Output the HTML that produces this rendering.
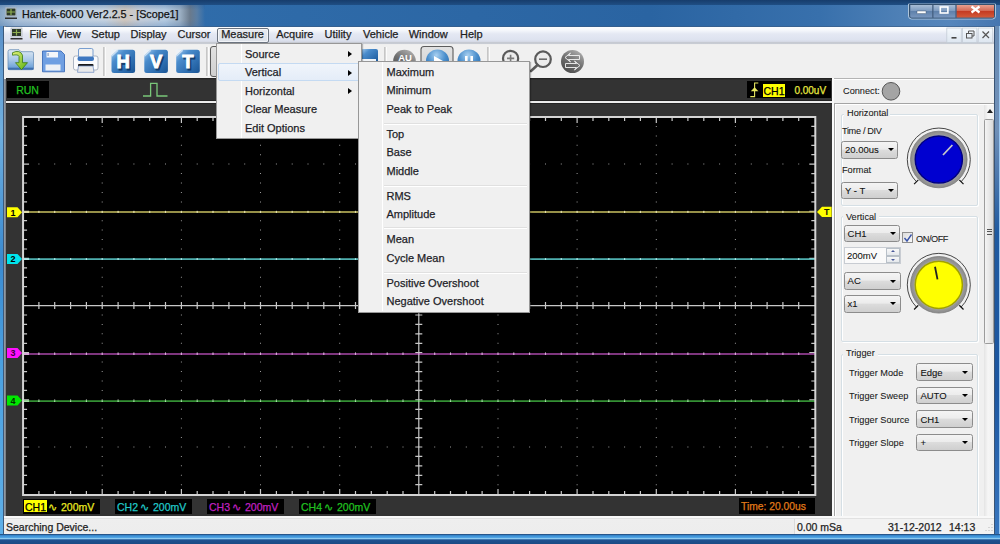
<!DOCTYPE html>
<html><head><meta charset="utf-8">
<style>
*{box-sizing:border-box;margin:0;padding:0}
html,body{width:1000px;height:544px;overflow:hidden;position:relative;font-family:"Liberation Sans",sans-serif;background:#2f6aa6}
.a{position:absolute}
.t{position:absolute;white-space:pre;line-height:1;-webkit-text-stroke:0.25px currentColor}
svg{position:absolute;overflow:visible}
</style></head><body>
<div class="a" style="left:0;top:0;width:1000px;height:27px;background:linear-gradient(90deg,#3270ae 0px,#2e6aa8 300px,#2a64a2 650px,#3870ac 820px,#4e80b6 900px,#5686bc 950px,#4676b0 1000px)"></div>
<div class="a" style="left:0;top:4px;width:205px;height:23px;background:linear-gradient(90deg,#86a6c6 0,#aac0d8 15px,#bccee0 60px,#c4d2e0 105px,#d0c6bc 125px,#c4ccd8 140px,#b4cae0 165px,#9cb0c4 180px,#6a7a8c 190px,#5a7ea4 197px,rgba(48,110,174,0) 205px)"></div>
<div class="a" style="left:0;top:4px;width:205px;height:23px;background:linear-gradient(180deg,rgba(40,90,150,0.35),rgba(255,255,255,0) 6px,rgba(255,255,255,0) 16px,rgba(60,110,170,0.3))"></div>
<div class="a" style="left:3px;top:25.6px;width:992px;height:1px;background:#3a5a80;opacity:0.6"></div>
<div class="a" style="left:0;top:0;width:1000px;height:4.5px;background:linear-gradient(180deg,#173d6c,#1f4e84)"></div>
<div class="t" style="left:22px;top:8.91px;font-size:10.75px;color:#111;">Hantek-6000 Ver2.2.5 - [Scope1]</div>
<div class="a" style="left:0;top:26px;width:3px;height:518px;background:linear-gradient(180deg,#5a90c8 0%,#70b0e0 20%,#3a8ad0 45%,#4aa0e0 65%,#60b0e8 100%)"></div>
<div class="a" style="left:3px;top:26px;width:1px;height:508px;background:#3c5a7c"></div>
<div class="a" style="left:4px;top:26px;width:1.8px;height:508px;background:linear-gradient(90deg,#9ca4ac,#70747a)"></div>
<div class="a" style="left:994px;top:26px;width:1px;height:508px;background:#3a5474"></div>
<div class="a" style="left:995px;top:26px;width:5px;height:518px;background:linear-gradient(180deg,#6a8cb4,#7090b8 20%,#1f5aa0 40%,#1c56a0 70%,#3a78c0)"></div>
<div class="a" style="left:999px;top:26px;width:1px;height:518px;background:#9cc8f0"></div>
<div class="a" style="left:0;top:533.6px;width:1000px;height:10.4px;background:linear-gradient(180deg,#234c7c 0,#2a5e98 1px,#3a8ed4 1.6px,#4a9ee0 3.4px,#90cdf2 4.4px,#78b8e8 5px,#1f5290 5.8px,#1a4a84 10.4px)"></div>
<div class="a" style="left:4px;top:26.5px;width:990px;height:18px;background:linear-gradient(180deg,#fcfdfe 0,#f6f8fc 3px,#e4e8f3 7px,#dde2ef 13px,#d6dae6 14.5px,#c6cad2 15.5px,#c8ccd4 16.8px,#eeeeee 17.2px)"></div>
<div class="t" style="left:29.5px;top:28.99px;font-size:11px;color:#1e1e1e;">File</div>
<div class="t" style="left:57px;top:28.99px;font-size:11px;color:#1e1e1e;">View</div>
<div class="t" style="left:91.2px;top:28.99px;font-size:11px;color:#1e1e1e;">Setup</div>
<div class="t" style="left:130.5px;top:28.99px;font-size:11px;color:#1e1e1e;">Display</div>
<div class="t" style="left:177.5px;top:28.99px;font-size:11px;color:#1e1e1e;">Cursor</div>
<div class="t" style="left:221.2px;top:28.99px;font-size:11px;color:#1e1e1e;">Measure</div>
<div class="t" style="left:276.2px;top:28.99px;font-size:11px;color:#1e1e1e;">Acquire</div>
<div class="t" style="left:324.5px;top:28.99px;font-size:11px;color:#1e1e1e;">Utility</div>
<div class="t" style="left:363px;top:28.99px;font-size:11px;color:#1e1e1e;">Vehicle</div>
<div class="t" style="left:408.7px;top:28.99px;font-size:11px;color:#1e1e1e;">Window</div>
<div class="t" style="left:460px;top:28.99px;font-size:11px;color:#1e1e1e;">Help</div>
<svg class="a" style="left:0;top:0" width="1000" height="46" viewBox="0 0 1000 46"><defs><linearGradient id="capb" x1="0" y1="0" x2="0" y2="1"><stop offset="0" stop-color="#a9bdd6"/><stop offset="0.45" stop-color="#7f9cc0"/><stop offset="0.5" stop-color="#5e80aa"/><stop offset="1" stop-color="#7896be"/></linearGradient><linearGradient id="capr" x1="0" y1="0" x2="0" y2="1"><stop offset="0" stop-color="#e8a090"/><stop offset="0.45" stop-color="#d46a56"/><stop offset="0.5" stop-color="#c43a22"/><stop offset="1" stop-color="#d25a3a"/></linearGradient><linearGradient id="mdib" x1="0" y1="0" x2="0" y2="1"><stop offset="0" stop-color="#f4f8fc"/><stop offset="1" stop-color="#dde6f0"/></linearGradient></defs><rect x="5.5" y="7.5" width="11" height="9" fill="#c8d4e0" stroke="#9aa8b8" stroke-width="0.6"/><rect x="6.5" y="8.5" width="9" height="7" fill="#2e3a28"/><path d="M11 9V15M7 12H15" stroke="#8fb050" stroke-width="1.2"/><rect x="5" y="17.5" width="12" height="1.5" fill="#303030"/><rect x="11" y="28" width="11" height="9" fill="#d8dde4" stroke="#a0a8b0" stroke-width="0.6"/><rect x="12" y="29" width="9" height="7" fill="#2e3a28"/><path d="M16.5 29.5V35.5M12.5 32.5H20.5" stroke="#8fb050" stroke-width="1.2"/><rect x="10.5" y="38" width="12" height="1.5" fill="#303030"/><path d="M908.5 4H995.5V16Q995.5 19 992.5 19H911.5Q908.5 19 908.5 16Z" fill="none" stroke="#c4d4e4" stroke-width="1" opacity="0.8"/><path d="M909.5 4.5H994.5V15.5Q994.5 18 992 18H912Q909.5 18 909.5 15.5Z" fill="#5a7aa0" stroke="#34506e" stroke-width="1"/><rect x="910.5" y="5" width="22" height="12.5" fill="url(#capb)"/><rect x="933.5" y="5" width="22" height="12.5" fill="url(#capb)"/><rect x="956.5" y="5" width="37.5" height="12.5" fill="url(#capr)"/><path d="M932.8 5V17.5M956 5V17.5" stroke="#3a5070" stroke-width="0.8"/><rect x="917" y="11" width="9" height="2.6" fill="#fff" stroke="#33475f" stroke-width="0.4"/><rect x="940.3" y="7" width="7.6" height="6" fill="none" stroke="#fff" stroke-width="1.6"/><path d="M971.5 6.5L979.5 12.5M979.5 6.5L971.5 12.5" stroke="#fff" stroke-width="2.2"/><rect x="946.8" y="28" width="14.5" height="14.5" fill="url(#mdib)" stroke="#c4ccd6" stroke-width="0.8"/><rect x="962.4" y="28" width="14.5" height="14.5" fill="url(#mdib)" stroke="#c4ccd6" stroke-width="0.8"/><rect x="978.2" y="28" width="14.5" height="14.5" fill="url(#mdib)" stroke="#c4ccd6" stroke-width="0.8"/><rect x="951.5" y="37" width="5" height="1.6" fill="#444"/><rect x="966.5" y="33.5" width="5.5" height="4.5" fill="none" stroke="#555" stroke-width="1"/><path d="M968.5 33.5V31H974V36H972" fill="none" stroke="#555" stroke-width="1"/><path d="M982.5 31.5L989 38M989 31.5L982.5 38" stroke="#555" stroke-width="1.2"/></svg>
<div class="a" style="left:4px;top:44.5px;width:990px;height:34px;background:#f0f0f0"></div>
<svg class="a" style="left:0;top:0" width="1000" height="80" viewBox="0 0 1000 80"><defs><linearGradient id="fold" x1="0" y1="0" x2="0" y2="1"><stop offset="0" stop-color="#dfeaf4"/><stop offset="0.5" stop-color="#a9c8e8"/><stop offset="1" stop-color="#5f98d4"/></linearGradient><linearGradient id="arr" x1="0" y1="0" x2="1" y2="1"><stop offset="0" stop-color="#e6f27a"/><stop offset="1" stop-color="#58b010"/></linearGradient><linearGradient id="hvt" x1="0" y1="0" x2="1" y2="1"><stop offset="0" stop-color="#a8cef0"/><stop offset="0.3" stop-color="#4a8ccc"/><stop offset="0.7" stop-color="#2c6cae"/><stop offset="1" stop-color="#1a5494"/></linearGradient><radialGradient id="gball" cx="0.4" cy="0.3" r="0.8"><stop offset="0" stop-color="#d0d0d0"/><stop offset="0.6" stop-color="#8a8a8a"/><stop offset="1" stop-color="#5a5a5a"/></radialGradient><radialGradient id="bball" cx="0.45" cy="0.25" r="0.8"><stop offset="0" stop-color="#a8d0f0"/><stop offset="0.5" stop-color="#4a8ecc"/><stop offset="1" stop-color="#2466a6"/></radialGradient><linearGradient id="btn" x1="0" y1="0" x2="0" y2="1"><stop offset="0" stop-color="#e2e2e2"/><stop offset="1" stop-color="#cfcfcf"/></linearGradient><linearGradient id="swg" x1="0.8" y1="0" x2="0.2" y2="1"><stop offset="0" stop-color="#b0b0b0"/><stop offset="0.5" stop-color="#707070"/><stop offset="1" stop-color="#4a4a4a"/></linearGradient></defs><g transform="translate(0,-0.8)"><path d="M8 52.5Q8 50.5 10 50.5H19L21 52.5H32Q33.5 52.5 33.5 54V69Q33.5 70.5 32 70.5H9.5Q8 70.5 8 69Z" fill="url(#fold)" stroke="#6a8fb8" stroke-width="0.8"/><rect x="8" y="68.5" width="25.5" height="2" fill="#3f6fae"/><path d="M12.5 53.5Q20 50 22.5 56V63.5H27.5L21.5 70.5L15.5 63.5H19V57Q18 55 12.5 56Z" fill="url(#arr)" stroke="#3a7a10" stroke-width="0.8"/></g><path d="M42.5 51H61L64.5 54.5V71.8H42.5Z" fill="#6f9fe2" stroke="#3d6cb8" stroke-width="0.9"/><rect x="46.5" y="52" width="11.5" height="5.5" fill="#f4f6fa"/><rect x="47.5" y="53" width="1.2" height="3" fill="#8aa0c0"/><rect x="45.5" y="64.5" width="15" height="6" fill="#eef1f6"/><rect x="73.5" y="56" width="24.5" height="14" rx="2" fill="#fafbfd" stroke="#9aa4b4" stroke-width="0.8"/><rect x="78.5" y="48.5" width="14.5" height="9" rx="1.5" fill="#f2f2f2" stroke="#5a8ac8" stroke-width="0.8"/><rect x="77.5" y="56.5" width="16.5" height="4.5" rx="2" fill="#3f78c0"/><rect x="78" y="64" width="15.5" height="2.5" rx="1" fill="#1a1a1a"/><path d="M78.5 66H93L94 72.3H77.5Z" fill="#eaeaea" stroke="#6a8ac0" stroke-width="0.7"/><rect x="103.3" y="47" width="1.4" height="29" fill="#b4b4b4"/><rect x="104.7" y="47" width="1" height="29" fill="#fff"/><rect x="206.3" y="47" width="1.4" height="29" fill="#b4b4b4"/><rect x="207.7" y="47" width="1" height="29" fill="#fff"/><rect x="384.3" y="47" width="1.4" height="29" fill="#b4b4b4"/><rect x="385.7" y="47" width="1" height="29" fill="#fff"/><rect x="487.3" y="47" width="1.4" height="29" fill="#b4b4b4"/><rect x="488.7" y="47" width="1" height="29" fill="#fff"/><rect x="111.5" y="49.8" width="23.6" height="23.2" rx="2.5" fill="url(#hvt)"/><path d="M111.0 49.3H118.5L111.0 56.099999999999994Z" fill="#eef2f6"/><path d="M111.5 56.2L118.0 50.2" stroke="#c4dcf2" stroke-width="1.5"/><text x="124.8" y="69.5" font-family="Liberation Sans" font-weight="bold" font-size="18.5" text-anchor="middle" fill="#0a2e58" stroke="#0a2e58" stroke-width="1" opacity="0.75">H</text><text x="123.3" y="68.2" font-family="Liberation Sans" font-weight="bold" font-size="18.5" text-anchor="middle" fill="#ffffff" stroke="#ffffff" stroke-width="0.9">H</text><rect x="144.3" y="49.8" width="23.6" height="23.2" rx="2.5" fill="url(#hvt)"/><path d="M143.8 49.3H151.3L143.8 56.099999999999994Z" fill="#eef2f6"/><path d="M144.3 56.2L150.8 50.2" stroke="#c4dcf2" stroke-width="1.5"/><text x="157.60000000000002" y="69.5" font-family="Liberation Sans" font-weight="bold" font-size="18.5" text-anchor="middle" fill="#0a2e58" stroke="#0a2e58" stroke-width="1" opacity="0.75">V</text><text x="156.10000000000002" y="68.2" font-family="Liberation Sans" font-weight="bold" font-size="18.5" text-anchor="middle" fill="#ffffff" stroke="#ffffff" stroke-width="0.9">V</text><rect x="176.2" y="49.8" width="23.6" height="23.2" rx="2.5" fill="url(#hvt)"/><path d="M175.7 49.3H183.2L175.7 56.099999999999994Z" fill="#eef2f6"/><path d="M176.2 56.2L182.7 50.2" stroke="#c4dcf2" stroke-width="1.5"/><text x="189.5" y="69.5" font-family="Liberation Sans" font-weight="bold" font-size="18.5" text-anchor="middle" fill="#0a2e58" stroke="#0a2e58" stroke-width="1" opacity="0.75">T</text><text x="188.0" y="68.2" font-family="Liberation Sans" font-weight="bold" font-size="18.5" text-anchor="middle" fill="#ffffff" stroke="#ffffff" stroke-width="0.9">T</text><rect x="210.5" y="46.5" width="20" height="30" rx="2.5" fill="url(#btn)" stroke="#5a5a5a" stroke-width="1"/><rect x="361" y="49" width="17" height="14" rx="2" fill="url(#hvt)"/><rect x="362" y="59" width="14" height="2.5" fill="#f0f4f8"/><circle cx="404.5" cy="61" r="11.3" fill="url(#swg)"/><text x="405" y="60.5" font-family="Liberation Sans" font-weight="bold" font-size="9.5" text-anchor="middle" fill="#fff">AU</text><rect x="421" y="46.5" width="32" height="30" rx="3" fill="url(#btn)" stroke="#5c5c5c" stroke-width="1.1"/><circle cx="437.5" cy="61" r="11.5" fill="url(#bball)"/><path d="M434 56L443 61L434 66Z" fill="#fff"/><circle cx="469" cy="61" r="11.5" fill="url(#bball)"/><rect x="465" y="56" width="2.6" height="10" fill="#fff"/><rect x="470.4" y="56" width="2.6" height="10" fill="#fff"/><circle cx="510.6" cy="58.4" r="7.6" fill="#ececec" stroke="#5a5a5a" stroke-width="2.2"/><path d="M507 58.4H514.2M510.6 54.8V62" stroke="#7a7a7a" stroke-width="1.6"/><path d="M505 64L499 70" stroke="#5a5a5a" stroke-width="2.6" stroke-linecap="round"/><circle cx="543" cy="59.2" r="7.8" fill="#ececec" stroke="#5a5a5a" stroke-width="2.2"/><path d="M539 59.2H547" stroke="#6a6a6a" stroke-width="1.6"/><path d="M537.5 65L531 71" stroke="#5a5a5a" stroke-width="2.6" stroke-linecap="round"/><circle cx="572.5" cy="61.5" r="11.5" fill="url(#swg)"/><path d="M579.5 55.5H568.5L570.5 53L565 57.5L570.5 62L568.5 59.5H579.5Z" fill="none" stroke="#f4f4f4" stroke-width="0.9"/><path d="M565.5 63.5H576.5L574.5 61L580 65.5L574.5 70L576.5 67.5H565.5Z" fill="none" stroke="#f4f4f4" stroke-width="0.9"/></svg>
<div class="a" style="left:5.8px;top:78.3px;width:826.2px;height:437.5px;background:linear-gradient(180deg,#1e1e1e 0,#2a2a2a 1.2px,#333 2px)"></div>
<div class="a" style="left:7px;top:81px;width:42px;height:17px;background:#000"></div>
<div class="t" style="left:16.2px;top:84.92px;font-size:10.5px;color:#22c022;">RUN</div>
<div class="a" style="left:5.8px;top:100px;width:826.2px;height:4.2px;background:linear-gradient(180deg,#262626 0,#222 1px,#eaeaea 1.3px,#eeeeee 2.9px,#222 3.2px,#2a2a2a 4.2px)"></div>
<div class="a" style="left:747px;top:81px;width:84px;height:17px;background:#000"></div>
<div class="a" style="left:762.5px;top:84.3px;width:22.5px;height:12.7px;background:#ffff00"></div>
<svg class="a" style="left:0;top:0" width="1000" height="110" viewBox="0 0 1000 110"><path d="M750.3 96.6H754.6V83H758.3" fill="none" stroke="#e4e460" stroke-width="1.1"/><path d="M750.8 91.3L754.6 87.3L758.4 91.3Z" fill="#e8e860"/></svg>
<div class="t" style="left:763.5px;top:85.62px;font-size:10.5px;color:#000;">CH1</div>
<div class="t" style="left:794.4px;top:86.04px;font-size:10px;color:#e8e840;">0.00uV</div>
<svg class="a" style="left:0;top:0" width="1000" height="544" viewBox="0 0 1000 544"><rect x="23.07" y="117.0" width="792.2299999999999" height="378.0" fill="#000"/><path d="M101.7 125.9h1v1h-1zM101.7 135.4h1v1h-1zM101.7 144.8h1v1h-1zM101.7 154.2h1v1h-1zM101.7 173.1h1v1h-1zM101.7 182.5h1v1h-1zM101.7 191.9h1v1h-1zM101.7 201.4h1v1h-1zM101.7 220.2h1v1h-1zM101.7 229.6h1v1h-1zM101.7 239.1h1v1h-1zM101.7 248.5h1v1h-1zM101.7 267.3h1v1h-1zM101.7 276.8h1v1h-1zM101.7 286.2h1v1h-1zM101.7 295.6h1v1h-1zM101.7 314.5h1v1h-1zM101.7 323.9h1v1h-1zM101.7 333.3h1v1h-1zM101.7 342.8h1v1h-1zM101.7 361.6h1v1h-1zM101.7 371.1h1v1h-1zM101.7 380.5h1v1h-1zM101.7 389.9h1v1h-1zM101.7 408.8h1v1h-1zM101.7 418.2h1v1h-1zM101.7 427.6h1v1h-1zM101.7 437.1h1v1h-1zM101.7 455.9h1v1h-1zM101.7 465.3h1v1h-1zM101.7 474.8h1v1h-1zM101.7 484.2h1v1h-1zM180.9 125.9h1v1h-1zM180.9 135.4h1v1h-1zM180.9 144.8h1v1h-1zM180.9 154.2h1v1h-1zM180.9 173.1h1v1h-1zM180.9 182.5h1v1h-1zM180.9 191.9h1v1h-1zM180.9 201.4h1v1h-1zM180.9 220.2h1v1h-1zM180.9 229.6h1v1h-1zM180.9 239.1h1v1h-1zM180.9 248.5h1v1h-1zM180.9 267.3h1v1h-1zM180.9 276.8h1v1h-1zM180.9 286.2h1v1h-1zM180.9 295.6h1v1h-1zM180.9 314.5h1v1h-1zM180.9 323.9h1v1h-1zM180.9 333.3h1v1h-1zM180.9 342.8h1v1h-1zM180.9 361.6h1v1h-1zM180.9 371.1h1v1h-1zM180.9 380.5h1v1h-1zM180.9 389.9h1v1h-1zM180.9 408.8h1v1h-1zM180.9 418.2h1v1h-1zM180.9 427.6h1v1h-1zM180.9 437.1h1v1h-1zM180.9 455.9h1v1h-1zM180.9 465.3h1v1h-1zM180.9 474.8h1v1h-1zM180.9 484.2h1v1h-1zM260.0 125.9h1v1h-1zM260.0 135.4h1v1h-1zM260.0 144.8h1v1h-1zM260.0 154.2h1v1h-1zM260.0 173.1h1v1h-1zM260.0 182.5h1v1h-1zM260.0 191.9h1v1h-1zM260.0 201.4h1v1h-1zM260.0 220.2h1v1h-1zM260.0 229.6h1v1h-1zM260.0 239.1h1v1h-1zM260.0 248.5h1v1h-1zM260.0 267.3h1v1h-1zM260.0 276.8h1v1h-1zM260.0 286.2h1v1h-1zM260.0 295.6h1v1h-1zM260.0 314.5h1v1h-1zM260.0 323.9h1v1h-1zM260.0 333.3h1v1h-1zM260.0 342.8h1v1h-1zM260.0 361.6h1v1h-1zM260.0 371.1h1v1h-1zM260.0 380.5h1v1h-1zM260.0 389.9h1v1h-1zM260.0 408.8h1v1h-1zM260.0 418.2h1v1h-1zM260.0 427.6h1v1h-1zM260.0 437.1h1v1h-1zM260.0 455.9h1v1h-1zM260.0 465.3h1v1h-1zM260.0 474.8h1v1h-1zM260.0 484.2h1v1h-1zM339.2 125.9h1v1h-1zM339.2 135.4h1v1h-1zM339.2 144.8h1v1h-1zM339.2 154.2h1v1h-1zM339.2 173.1h1v1h-1zM339.2 182.5h1v1h-1zM339.2 191.9h1v1h-1zM339.2 201.4h1v1h-1zM339.2 220.2h1v1h-1zM339.2 229.6h1v1h-1zM339.2 239.1h1v1h-1zM339.2 248.5h1v1h-1zM339.2 267.3h1v1h-1zM339.2 276.8h1v1h-1zM339.2 286.2h1v1h-1zM339.2 295.6h1v1h-1zM339.2 314.5h1v1h-1zM339.2 323.9h1v1h-1zM339.2 333.3h1v1h-1zM339.2 342.8h1v1h-1zM339.2 361.6h1v1h-1zM339.2 371.1h1v1h-1zM339.2 380.5h1v1h-1zM339.2 389.9h1v1h-1zM339.2 408.8h1v1h-1zM339.2 418.2h1v1h-1zM339.2 427.6h1v1h-1zM339.2 437.1h1v1h-1zM339.2 455.9h1v1h-1zM339.2 465.3h1v1h-1zM339.2 474.8h1v1h-1zM339.2 484.2h1v1h-1zM418.3 125.9h1v1h-1zM418.3 135.4h1v1h-1zM418.3 144.8h1v1h-1zM418.3 154.2h1v1h-1zM418.3 173.1h1v1h-1zM418.3 182.5h1v1h-1zM418.3 191.9h1v1h-1zM418.3 201.4h1v1h-1zM418.3 220.2h1v1h-1zM418.3 229.6h1v1h-1zM418.3 239.1h1v1h-1zM418.3 248.5h1v1h-1zM418.3 267.3h1v1h-1zM418.3 276.8h1v1h-1zM418.3 286.2h1v1h-1zM418.3 295.6h1v1h-1zM418.3 314.5h1v1h-1zM418.3 323.9h1v1h-1zM418.3 333.3h1v1h-1zM418.3 342.8h1v1h-1zM418.3 361.6h1v1h-1zM418.3 371.1h1v1h-1zM418.3 380.5h1v1h-1zM418.3 389.9h1v1h-1zM418.3 408.8h1v1h-1zM418.3 418.2h1v1h-1zM418.3 427.6h1v1h-1zM418.3 437.1h1v1h-1zM418.3 455.9h1v1h-1zM418.3 465.3h1v1h-1zM418.3 474.8h1v1h-1zM418.3 484.2h1v1h-1zM497.5 125.9h1v1h-1zM497.5 135.4h1v1h-1zM497.5 144.8h1v1h-1zM497.5 154.2h1v1h-1zM497.5 173.1h1v1h-1zM497.5 182.5h1v1h-1zM497.5 191.9h1v1h-1zM497.5 201.4h1v1h-1zM497.5 220.2h1v1h-1zM497.5 229.6h1v1h-1zM497.5 239.1h1v1h-1zM497.5 248.5h1v1h-1zM497.5 267.3h1v1h-1zM497.5 276.8h1v1h-1zM497.5 286.2h1v1h-1zM497.5 295.6h1v1h-1zM497.5 314.5h1v1h-1zM497.5 323.9h1v1h-1zM497.5 333.3h1v1h-1zM497.5 342.8h1v1h-1zM497.5 361.6h1v1h-1zM497.5 371.1h1v1h-1zM497.5 380.5h1v1h-1zM497.5 389.9h1v1h-1zM497.5 408.8h1v1h-1zM497.5 418.2h1v1h-1zM497.5 427.6h1v1h-1zM497.5 437.1h1v1h-1zM497.5 455.9h1v1h-1zM497.5 465.3h1v1h-1zM497.5 474.8h1v1h-1zM497.5 484.2h1v1h-1zM576.6 125.9h1v1h-1zM576.6 135.4h1v1h-1zM576.6 144.8h1v1h-1zM576.6 154.2h1v1h-1zM576.6 173.1h1v1h-1zM576.6 182.5h1v1h-1zM576.6 191.9h1v1h-1zM576.6 201.4h1v1h-1zM576.6 220.2h1v1h-1zM576.6 229.6h1v1h-1zM576.6 239.1h1v1h-1zM576.6 248.5h1v1h-1zM576.6 267.3h1v1h-1zM576.6 276.8h1v1h-1zM576.6 286.2h1v1h-1zM576.6 295.6h1v1h-1zM576.6 314.5h1v1h-1zM576.6 323.9h1v1h-1zM576.6 333.3h1v1h-1zM576.6 342.8h1v1h-1zM576.6 361.6h1v1h-1zM576.6 371.1h1v1h-1zM576.6 380.5h1v1h-1zM576.6 389.9h1v1h-1zM576.6 408.8h1v1h-1zM576.6 418.2h1v1h-1zM576.6 427.6h1v1h-1zM576.6 437.1h1v1h-1zM576.6 455.9h1v1h-1zM576.6 465.3h1v1h-1zM576.6 474.8h1v1h-1zM576.6 484.2h1v1h-1zM655.8 125.9h1v1h-1zM655.8 135.4h1v1h-1zM655.8 144.8h1v1h-1zM655.8 154.2h1v1h-1zM655.8 173.1h1v1h-1zM655.8 182.5h1v1h-1zM655.8 191.9h1v1h-1zM655.8 201.4h1v1h-1zM655.8 220.2h1v1h-1zM655.8 229.6h1v1h-1zM655.8 239.1h1v1h-1zM655.8 248.5h1v1h-1zM655.8 267.3h1v1h-1zM655.8 276.8h1v1h-1zM655.8 286.2h1v1h-1zM655.8 295.6h1v1h-1zM655.8 314.5h1v1h-1zM655.8 323.9h1v1h-1zM655.8 333.3h1v1h-1zM655.8 342.8h1v1h-1zM655.8 361.6h1v1h-1zM655.8 371.1h1v1h-1zM655.8 380.5h1v1h-1zM655.8 389.9h1v1h-1zM655.8 408.8h1v1h-1zM655.8 418.2h1v1h-1zM655.8 427.6h1v1h-1zM655.8 437.1h1v1h-1zM655.8 455.9h1v1h-1zM655.8 465.3h1v1h-1zM655.8 474.8h1v1h-1zM655.8 484.2h1v1h-1zM734.9 125.9h1v1h-1zM734.9 135.4h1v1h-1zM734.9 144.8h1v1h-1zM734.9 154.2h1v1h-1zM734.9 173.1h1v1h-1zM734.9 182.5h1v1h-1zM734.9 191.9h1v1h-1zM734.9 201.4h1v1h-1zM734.9 220.2h1v1h-1zM734.9 229.6h1v1h-1zM734.9 239.1h1v1h-1zM734.9 248.5h1v1h-1zM734.9 267.3h1v1h-1zM734.9 276.8h1v1h-1zM734.9 286.2h1v1h-1zM734.9 295.6h1v1h-1zM734.9 314.5h1v1h-1zM734.9 323.9h1v1h-1zM734.9 333.3h1v1h-1zM734.9 342.8h1v1h-1zM734.9 361.6h1v1h-1zM734.9 371.1h1v1h-1zM734.9 380.5h1v1h-1zM734.9 389.9h1v1h-1zM734.9 408.8h1v1h-1zM734.9 418.2h1v1h-1zM734.9 427.6h1v1h-1zM734.9 437.1h1v1h-1zM734.9 455.9h1v1h-1zM734.9 465.3h1v1h-1zM734.9 474.8h1v1h-1zM734.9 484.2h1v1h-1zM38.4 163.6h1v1h-1zM54.2 163.6h1v1h-1zM70.1 163.6h1v1h-1zM85.9 163.6h1v1h-1zM117.6 163.6h1v1h-1zM133.4 163.6h1v1h-1zM149.2 163.6h1v1h-1zM165.0 163.6h1v1h-1zM196.7 163.6h1v1h-1zM212.5 163.6h1v1h-1zM228.4 163.6h1v1h-1zM244.2 163.6h1v1h-1zM275.9 163.6h1v1h-1zM291.7 163.6h1v1h-1zM307.5 163.6h1v1h-1zM323.3 163.6h1v1h-1zM355.0 163.6h1v1h-1zM370.8 163.6h1v1h-1zM386.7 163.6h1v1h-1zM402.5 163.6h1v1h-1zM434.2 163.6h1v1h-1zM450.0 163.6h1v1h-1zM465.8 163.6h1v1h-1zM481.6 163.6h1v1h-1zM513.3 163.6h1v1h-1zM529.1 163.6h1v1h-1zM545.0 163.6h1v1h-1zM560.8 163.6h1v1h-1zM592.5 163.6h1v1h-1zM608.3 163.6h1v1h-1zM624.1 163.6h1v1h-1zM639.9 163.6h1v1h-1zM671.6 163.6h1v1h-1zM687.4 163.6h1v1h-1zM703.3 163.6h1v1h-1zM719.1 163.6h1v1h-1zM750.8 163.6h1v1h-1zM766.6 163.6h1v1h-1zM782.4 163.6h1v1h-1zM798.2 163.6h1v1h-1zM38.4 210.8h1v1h-1zM54.2 210.8h1v1h-1zM70.1 210.8h1v1h-1zM85.9 210.8h1v1h-1zM117.6 210.8h1v1h-1zM133.4 210.8h1v1h-1zM149.2 210.8h1v1h-1zM165.0 210.8h1v1h-1zM196.7 210.8h1v1h-1zM212.5 210.8h1v1h-1zM228.4 210.8h1v1h-1zM244.2 210.8h1v1h-1zM275.9 210.8h1v1h-1zM291.7 210.8h1v1h-1zM307.5 210.8h1v1h-1zM323.3 210.8h1v1h-1zM355.0 210.8h1v1h-1zM370.8 210.8h1v1h-1zM386.7 210.8h1v1h-1zM402.5 210.8h1v1h-1zM434.2 210.8h1v1h-1zM450.0 210.8h1v1h-1zM465.8 210.8h1v1h-1zM481.6 210.8h1v1h-1zM513.3 210.8h1v1h-1zM529.1 210.8h1v1h-1zM545.0 210.8h1v1h-1zM560.8 210.8h1v1h-1zM592.5 210.8h1v1h-1zM608.3 210.8h1v1h-1zM624.1 210.8h1v1h-1zM639.9 210.8h1v1h-1zM671.6 210.8h1v1h-1zM687.4 210.8h1v1h-1zM703.3 210.8h1v1h-1zM719.1 210.8h1v1h-1zM750.8 210.8h1v1h-1zM766.6 210.8h1v1h-1zM782.4 210.8h1v1h-1zM798.2 210.8h1v1h-1zM38.4 257.9h1v1h-1zM54.2 257.9h1v1h-1zM70.1 257.9h1v1h-1zM85.9 257.9h1v1h-1zM117.6 257.9h1v1h-1zM133.4 257.9h1v1h-1zM149.2 257.9h1v1h-1zM165.0 257.9h1v1h-1zM196.7 257.9h1v1h-1zM212.5 257.9h1v1h-1zM228.4 257.9h1v1h-1zM244.2 257.9h1v1h-1zM275.9 257.9h1v1h-1zM291.7 257.9h1v1h-1zM307.5 257.9h1v1h-1zM323.3 257.9h1v1h-1zM355.0 257.9h1v1h-1zM370.8 257.9h1v1h-1zM386.7 257.9h1v1h-1zM402.5 257.9h1v1h-1zM434.2 257.9h1v1h-1zM450.0 257.9h1v1h-1zM465.8 257.9h1v1h-1zM481.6 257.9h1v1h-1zM513.3 257.9h1v1h-1zM529.1 257.9h1v1h-1zM545.0 257.9h1v1h-1zM560.8 257.9h1v1h-1zM592.5 257.9h1v1h-1zM608.3 257.9h1v1h-1zM624.1 257.9h1v1h-1zM639.9 257.9h1v1h-1zM671.6 257.9h1v1h-1zM687.4 257.9h1v1h-1zM703.3 257.9h1v1h-1zM719.1 257.9h1v1h-1zM750.8 257.9h1v1h-1zM766.6 257.9h1v1h-1zM782.4 257.9h1v1h-1zM798.2 257.9h1v1h-1zM38.4 305.1h1v1h-1zM54.2 305.1h1v1h-1zM70.1 305.1h1v1h-1zM85.9 305.1h1v1h-1zM117.6 305.1h1v1h-1zM133.4 305.1h1v1h-1zM149.2 305.1h1v1h-1zM165.0 305.1h1v1h-1zM196.7 305.1h1v1h-1zM212.5 305.1h1v1h-1zM228.4 305.1h1v1h-1zM244.2 305.1h1v1h-1zM275.9 305.1h1v1h-1zM291.7 305.1h1v1h-1zM307.5 305.1h1v1h-1zM323.3 305.1h1v1h-1zM355.0 305.1h1v1h-1zM370.8 305.1h1v1h-1zM386.7 305.1h1v1h-1zM402.5 305.1h1v1h-1zM434.2 305.1h1v1h-1zM450.0 305.1h1v1h-1zM465.8 305.1h1v1h-1zM481.6 305.1h1v1h-1zM513.3 305.1h1v1h-1zM529.1 305.1h1v1h-1zM545.0 305.1h1v1h-1zM560.8 305.1h1v1h-1zM592.5 305.1h1v1h-1zM608.3 305.1h1v1h-1zM624.1 305.1h1v1h-1zM639.9 305.1h1v1h-1zM671.6 305.1h1v1h-1zM687.4 305.1h1v1h-1zM703.3 305.1h1v1h-1zM719.1 305.1h1v1h-1zM750.8 305.1h1v1h-1zM766.6 305.1h1v1h-1zM782.4 305.1h1v1h-1zM798.2 305.1h1v1h-1zM38.4 352.2h1v1h-1zM54.2 352.2h1v1h-1zM70.1 352.2h1v1h-1zM85.9 352.2h1v1h-1zM117.6 352.2h1v1h-1zM133.4 352.2h1v1h-1zM149.2 352.2h1v1h-1zM165.0 352.2h1v1h-1zM196.7 352.2h1v1h-1zM212.5 352.2h1v1h-1zM228.4 352.2h1v1h-1zM244.2 352.2h1v1h-1zM275.9 352.2h1v1h-1zM291.7 352.2h1v1h-1zM307.5 352.2h1v1h-1zM323.3 352.2h1v1h-1zM355.0 352.2h1v1h-1zM370.8 352.2h1v1h-1zM386.7 352.2h1v1h-1zM402.5 352.2h1v1h-1zM434.2 352.2h1v1h-1zM450.0 352.2h1v1h-1zM465.8 352.2h1v1h-1zM481.6 352.2h1v1h-1zM513.3 352.2h1v1h-1zM529.1 352.2h1v1h-1zM545.0 352.2h1v1h-1zM560.8 352.2h1v1h-1zM592.5 352.2h1v1h-1zM608.3 352.2h1v1h-1zM624.1 352.2h1v1h-1zM639.9 352.2h1v1h-1zM671.6 352.2h1v1h-1zM687.4 352.2h1v1h-1zM703.3 352.2h1v1h-1zM719.1 352.2h1v1h-1zM750.8 352.2h1v1h-1zM766.6 352.2h1v1h-1zM782.4 352.2h1v1h-1zM798.2 352.2h1v1h-1zM38.4 399.3h1v1h-1zM54.2 399.3h1v1h-1zM70.1 399.3h1v1h-1zM85.9 399.3h1v1h-1zM117.6 399.3h1v1h-1zM133.4 399.3h1v1h-1zM149.2 399.3h1v1h-1zM165.0 399.3h1v1h-1zM196.7 399.3h1v1h-1zM212.5 399.3h1v1h-1zM228.4 399.3h1v1h-1zM244.2 399.3h1v1h-1zM275.9 399.3h1v1h-1zM291.7 399.3h1v1h-1zM307.5 399.3h1v1h-1zM323.3 399.3h1v1h-1zM355.0 399.3h1v1h-1zM370.8 399.3h1v1h-1zM386.7 399.3h1v1h-1zM402.5 399.3h1v1h-1zM434.2 399.3h1v1h-1zM450.0 399.3h1v1h-1zM465.8 399.3h1v1h-1zM481.6 399.3h1v1h-1zM513.3 399.3h1v1h-1zM529.1 399.3h1v1h-1zM545.0 399.3h1v1h-1zM560.8 399.3h1v1h-1zM592.5 399.3h1v1h-1zM608.3 399.3h1v1h-1zM624.1 399.3h1v1h-1zM639.9 399.3h1v1h-1zM671.6 399.3h1v1h-1zM687.4 399.3h1v1h-1zM703.3 399.3h1v1h-1zM719.1 399.3h1v1h-1zM750.8 399.3h1v1h-1zM766.6 399.3h1v1h-1zM782.4 399.3h1v1h-1zM798.2 399.3h1v1h-1zM38.4 446.5h1v1h-1zM54.2 446.5h1v1h-1zM70.1 446.5h1v1h-1zM85.9 446.5h1v1h-1zM117.6 446.5h1v1h-1zM133.4 446.5h1v1h-1zM149.2 446.5h1v1h-1zM165.0 446.5h1v1h-1zM196.7 446.5h1v1h-1zM212.5 446.5h1v1h-1zM228.4 446.5h1v1h-1zM244.2 446.5h1v1h-1zM275.9 446.5h1v1h-1zM291.7 446.5h1v1h-1zM307.5 446.5h1v1h-1zM323.3 446.5h1v1h-1zM355.0 446.5h1v1h-1zM370.8 446.5h1v1h-1zM386.7 446.5h1v1h-1zM402.5 446.5h1v1h-1zM434.2 446.5h1v1h-1zM450.0 446.5h1v1h-1zM465.8 446.5h1v1h-1zM481.6 446.5h1v1h-1zM513.3 446.5h1v1h-1zM529.1 446.5h1v1h-1zM545.0 446.5h1v1h-1zM560.8 446.5h1v1h-1zM592.5 446.5h1v1h-1zM608.3 446.5h1v1h-1zM624.1 446.5h1v1h-1zM639.9 446.5h1v1h-1zM671.6 446.5h1v1h-1zM687.4 446.5h1v1h-1zM703.3 446.5h1v1h-1zM719.1 446.5h1v1h-1zM750.8 446.5h1v1h-1zM766.6 446.5h1v1h-1zM782.4 446.5h1v1h-1zM798.2 446.5h1v1h-1zM101.7 163.6h1v1h-1zM101.7 210.8h1v1h-1zM101.7 257.9h1v1h-1zM101.7 305.1h1v1h-1zM101.7 352.2h1v1h-1zM101.7 399.3h1v1h-1zM101.7 446.5h1v1h-1zM180.9 163.6h1v1h-1zM180.9 210.8h1v1h-1zM180.9 257.9h1v1h-1zM180.9 305.1h1v1h-1zM180.9 352.2h1v1h-1zM180.9 399.3h1v1h-1zM180.9 446.5h1v1h-1zM260.0 163.6h1v1h-1zM260.0 210.8h1v1h-1zM260.0 257.9h1v1h-1zM260.0 305.1h1v1h-1zM260.0 352.2h1v1h-1zM260.0 399.3h1v1h-1zM260.0 446.5h1v1h-1zM339.2 163.6h1v1h-1zM339.2 210.8h1v1h-1zM339.2 257.9h1v1h-1zM339.2 305.1h1v1h-1zM339.2 352.2h1v1h-1zM339.2 399.3h1v1h-1zM339.2 446.5h1v1h-1zM418.3 163.6h1v1h-1zM418.3 210.8h1v1h-1zM418.3 257.9h1v1h-1zM418.3 305.1h1v1h-1zM418.3 352.2h1v1h-1zM418.3 399.3h1v1h-1zM418.3 446.5h1v1h-1zM497.5 163.6h1v1h-1zM497.5 210.8h1v1h-1zM497.5 257.9h1v1h-1zM497.5 305.1h1v1h-1zM497.5 352.2h1v1h-1zM497.5 399.3h1v1h-1zM497.5 446.5h1v1h-1zM576.6 163.6h1v1h-1zM576.6 210.8h1v1h-1zM576.6 257.9h1v1h-1zM576.6 305.1h1v1h-1zM576.6 352.2h1v1h-1zM576.6 399.3h1v1h-1zM576.6 446.5h1v1h-1zM655.8 163.6h1v1h-1zM655.8 210.8h1v1h-1zM655.8 257.9h1v1h-1zM655.8 305.1h1v1h-1zM655.8 352.2h1v1h-1zM655.8 399.3h1v1h-1zM655.8 446.5h1v1h-1zM734.9 163.6h1v1h-1zM734.9 210.8h1v1h-1zM734.9 257.9h1v1h-1zM734.9 305.1h1v1h-1zM734.9 352.2h1v1h-1zM734.9 399.3h1v1h-1zM734.9 446.5h1v1h-1z" fill="#9a9a9a"/><path d="M38.9 117.0v4M38.9 495.0v-4M38.9 302.1v7M54.7 117.0v4M54.7 495.0v-4M54.7 302.1v7M70.6 117.0v4M70.6 495.0v-4M70.6 302.1v7M86.4 117.0v4M86.4 495.0v-4M86.4 302.1v7M102.2 117.0v6M102.2 495.0v-6M102.2 302.1v7M118.1 117.0v4M118.1 495.0v-4M118.1 302.1v7M133.9 117.0v4M133.9 495.0v-4M133.9 302.1v7M149.7 117.0v4M149.7 495.0v-4M149.7 302.1v7M165.5 117.0v4M165.5 495.0v-4M165.5 302.1v7M181.4 117.0v6M181.4 495.0v-6M181.4 302.1v7M197.2 117.0v4M197.2 495.0v-4M197.2 302.1v7M213.0 117.0v4M213.0 495.0v-4M213.0 302.1v7M228.9 117.0v4M228.9 495.0v-4M228.9 302.1v7M244.7 117.0v4M244.7 495.0v-4M244.7 302.1v7M260.5 117.0v6M260.5 495.0v-6M260.5 302.1v7M276.4 117.0v4M276.4 495.0v-4M276.4 302.1v7M292.2 117.0v4M292.2 495.0v-4M292.2 302.1v7M308.0 117.0v4M308.0 495.0v-4M308.0 302.1v7M323.8 117.0v4M323.8 495.0v-4M323.8 302.1v7M339.7 117.0v6M339.7 495.0v-6M339.7 302.1v7M355.5 117.0v4M355.5 495.0v-4M355.5 302.1v7M371.3 117.0v4M371.3 495.0v-4M371.3 302.1v7M387.2 117.0v4M387.2 495.0v-4M387.2 302.1v7M403.0 117.0v4M403.0 495.0v-4M403.0 302.1v7M418.8 117.0v6M418.8 495.0v-6M418.8 302.1v7M434.7 117.0v4M434.7 495.0v-4M434.7 302.1v7M450.5 117.0v4M450.5 495.0v-4M450.5 302.1v7M466.3 117.0v4M466.3 495.0v-4M466.3 302.1v7M482.1 117.0v4M482.1 495.0v-4M482.1 302.1v7M498.0 117.0v6M498.0 495.0v-6M498.0 302.1v7M513.8 117.0v4M513.8 495.0v-4M513.8 302.1v7M529.6 117.0v4M529.6 495.0v-4M529.6 302.1v7M545.5 117.0v4M545.5 495.0v-4M545.5 302.1v7M561.3 117.0v4M561.3 495.0v-4M561.3 302.1v7M577.1 117.0v6M577.1 495.0v-6M577.1 302.1v7M593.0 117.0v4M593.0 495.0v-4M593.0 302.1v7M608.8 117.0v4M608.8 495.0v-4M608.8 302.1v7M624.6 117.0v4M624.6 495.0v-4M624.6 302.1v7M640.4 117.0v4M640.4 495.0v-4M640.4 302.1v7M656.3 117.0v6M656.3 495.0v-6M656.3 302.1v7M672.1 117.0v4M672.1 495.0v-4M672.1 302.1v7M687.9 117.0v4M687.9 495.0v-4M687.9 302.1v7M703.8 117.0v4M703.8 495.0v-4M703.8 302.1v7M719.6 117.0v4M719.6 495.0v-4M719.6 302.1v7M735.4 117.0v6M735.4 495.0v-6M735.4 302.1v7M751.3 117.0v4M751.3 495.0v-4M751.3 302.1v7M767.1 117.0v4M767.1 495.0v-4M767.1 302.1v7M782.9 117.0v4M782.9 495.0v-4M782.9 302.1v7M798.7 117.0v4M798.7 495.0v-4M798.7 302.1v7M23.07 126.4h4M815.3 126.4h-4M415.3 126.4h7M23.07 135.9h4M815.3 135.9h-4M415.3 135.9h7M23.07 145.3h4M815.3 145.3h-4M415.3 145.3h7M23.07 154.7h4M815.3 154.7h-4M415.3 154.7h7M23.07 164.1h6M815.3 164.1h-6M415.3 164.1h7M23.07 173.6h4M815.3 173.6h-4M415.3 173.6h7M23.07 183.0h4M815.3 183.0h-4M415.3 183.0h7M23.07 192.4h4M815.3 192.4h-4M415.3 192.4h7M23.07 201.9h4M815.3 201.9h-4M415.3 201.9h7M23.07 211.3h6M815.3 211.3h-6M415.3 211.3h7M23.07 220.7h4M815.3 220.7h-4M415.3 220.7h7M23.07 230.1h4M815.3 230.1h-4M415.3 230.1h7M23.07 239.6h4M815.3 239.6h-4M415.3 239.6h7M23.07 249.0h4M815.3 249.0h-4M415.3 249.0h7M23.07 258.4h6M815.3 258.4h-6M415.3 258.4h7M23.07 267.8h4M815.3 267.8h-4M415.3 267.8h7M23.07 277.3h4M815.3 277.3h-4M415.3 277.3h7M23.07 286.7h4M815.3 286.7h-4M415.3 286.7h7M23.07 296.1h4M815.3 296.1h-4M415.3 296.1h7M23.07 305.6h6M815.3 305.6h-6M415.3 305.6h7M23.07 315.0h4M815.3 315.0h-4M415.3 315.0h7M23.07 324.4h4M815.3 324.4h-4M415.3 324.4h7M23.07 333.8h4M815.3 333.8h-4M415.3 333.8h7M23.07 343.3h4M815.3 343.3h-4M415.3 343.3h7M23.07 352.7h6M815.3 352.7h-6M415.3 352.7h7M23.07 362.1h4M815.3 362.1h-4M415.3 362.1h7M23.07 371.6h4M815.3 371.6h-4M415.3 371.6h7M23.07 381.0h4M815.3 381.0h-4M415.3 381.0h7M23.07 390.4h4M815.3 390.4h-4M415.3 390.4h7M23.07 399.8h6M815.3 399.8h-6M415.3 399.8h7M23.07 409.3h4M815.3 409.3h-4M415.3 409.3h7M23.07 418.7h4M815.3 418.7h-4M415.3 418.7h7M23.07 428.1h4M815.3 428.1h-4M415.3 428.1h7M23.07 437.6h4M815.3 437.6h-4M415.3 437.6h7M23.07 447.0h6M815.3 447.0h-6M415.3 447.0h7M23.07 456.4h4M815.3 456.4h-4M415.3 456.4h7M23.07 465.8h4M815.3 465.8h-4M415.3 465.8h7M23.07 475.3h4M815.3 475.3h-4M415.3 475.3h7M23.07 484.7h4M815.3 484.7h-4M415.3 484.7h7M418.8 117.0V495.0M23.07 305.6H815.3" stroke="#c8c8c8" stroke-width="1.2" fill="none"/><rect x="23.07" y="211.25" width="792.2299999999999" height="1.5" fill="#c8c060"/><path d="M38.3 211.1h1.2v1.8h-1.2zM54.1 211.1h1.2v1.8h-1.2zM70.0 211.1h1.2v1.8h-1.2zM85.8 211.1h1.2v1.8h-1.2zM101.6 211.1h1.2v1.8h-1.2zM117.5 211.1h1.2v1.8h-1.2zM133.3 211.1h1.2v1.8h-1.2zM149.1 211.1h1.2v1.8h-1.2zM164.9 211.1h1.2v1.8h-1.2zM180.8 211.1h1.2v1.8h-1.2zM196.6 211.1h1.2v1.8h-1.2zM212.4 211.1h1.2v1.8h-1.2zM228.3 211.1h1.2v1.8h-1.2zM244.1 211.1h1.2v1.8h-1.2zM259.9 211.1h1.2v1.8h-1.2zM275.8 211.1h1.2v1.8h-1.2zM291.6 211.1h1.2v1.8h-1.2zM307.4 211.1h1.2v1.8h-1.2zM323.2 211.1h1.2v1.8h-1.2zM339.1 211.1h1.2v1.8h-1.2zM354.9 211.1h1.2v1.8h-1.2zM370.7 211.1h1.2v1.8h-1.2zM386.6 211.1h1.2v1.8h-1.2zM402.4 211.1h1.2v1.8h-1.2zM418.2 211.1h1.2v1.8h-1.2zM434.1 211.1h1.2v1.8h-1.2zM449.9 211.1h1.2v1.8h-1.2zM465.7 211.1h1.2v1.8h-1.2zM481.5 211.1h1.2v1.8h-1.2zM497.4 211.1h1.2v1.8h-1.2zM513.2 211.1h1.2v1.8h-1.2zM529.0 211.1h1.2v1.8h-1.2zM544.9 211.1h1.2v1.8h-1.2zM560.7 211.1h1.2v1.8h-1.2zM576.5 211.1h1.2v1.8h-1.2zM592.4 211.1h1.2v1.8h-1.2zM608.2 211.1h1.2v1.8h-1.2zM624.0 211.1h1.2v1.8h-1.2zM639.8 211.1h1.2v1.8h-1.2zM655.7 211.1h1.2v1.8h-1.2zM671.5 211.1h1.2v1.8h-1.2zM687.3 211.1h1.2v1.8h-1.2zM703.2 211.1h1.2v1.8h-1.2zM719.0 211.1h1.2v1.8h-1.2zM734.8 211.1h1.2v1.8h-1.2zM750.7 211.1h1.2v1.8h-1.2zM766.5 211.1h1.2v1.8h-1.2zM782.3 211.1h1.2v1.8h-1.2zM798.1 211.1h1.2v1.8h-1.2zM23.07 211.1h6v1.9h-6z" fill="#e0dca8"/><rect x="23.07" y="258.35" width="792.2299999999999" height="1.5" fill="#5ccccc"/><path d="M38.3 258.2h1.2v1.8h-1.2zM54.1 258.2h1.2v1.8h-1.2zM70.0 258.2h1.2v1.8h-1.2zM85.8 258.2h1.2v1.8h-1.2zM101.6 258.2h1.2v1.8h-1.2zM117.5 258.2h1.2v1.8h-1.2zM133.3 258.2h1.2v1.8h-1.2zM149.1 258.2h1.2v1.8h-1.2zM164.9 258.2h1.2v1.8h-1.2zM180.8 258.2h1.2v1.8h-1.2zM196.6 258.2h1.2v1.8h-1.2zM212.4 258.2h1.2v1.8h-1.2zM228.3 258.2h1.2v1.8h-1.2zM244.1 258.2h1.2v1.8h-1.2zM259.9 258.2h1.2v1.8h-1.2zM275.8 258.2h1.2v1.8h-1.2zM291.6 258.2h1.2v1.8h-1.2zM307.4 258.2h1.2v1.8h-1.2zM323.2 258.2h1.2v1.8h-1.2zM339.1 258.2h1.2v1.8h-1.2zM354.9 258.2h1.2v1.8h-1.2zM370.7 258.2h1.2v1.8h-1.2zM386.6 258.2h1.2v1.8h-1.2zM402.4 258.2h1.2v1.8h-1.2zM418.2 258.2h1.2v1.8h-1.2zM434.1 258.2h1.2v1.8h-1.2zM449.9 258.2h1.2v1.8h-1.2zM465.7 258.2h1.2v1.8h-1.2zM481.5 258.2h1.2v1.8h-1.2zM497.4 258.2h1.2v1.8h-1.2zM513.2 258.2h1.2v1.8h-1.2zM529.0 258.2h1.2v1.8h-1.2zM544.9 258.2h1.2v1.8h-1.2zM560.7 258.2h1.2v1.8h-1.2zM576.5 258.2h1.2v1.8h-1.2zM592.4 258.2h1.2v1.8h-1.2zM608.2 258.2h1.2v1.8h-1.2zM624.0 258.2h1.2v1.8h-1.2zM639.8 258.2h1.2v1.8h-1.2zM655.7 258.2h1.2v1.8h-1.2zM671.5 258.2h1.2v1.8h-1.2zM687.3 258.2h1.2v1.8h-1.2zM703.2 258.2h1.2v1.8h-1.2zM719.0 258.2h1.2v1.8h-1.2zM734.8 258.2h1.2v1.8h-1.2zM750.7 258.2h1.2v1.8h-1.2zM766.5 258.2h1.2v1.8h-1.2zM782.3 258.2h1.2v1.8h-1.2zM798.1 258.2h1.2v1.8h-1.2zM23.07 258.2h6v1.9h-6z" fill="#b0e8e8"/><rect x="23.07" y="353.25" width="792.2299999999999" height="1.5" fill="#a848a8"/><path d="M38.3 353.1h1.2v1.8h-1.2zM54.1 353.1h1.2v1.8h-1.2zM70.0 353.1h1.2v1.8h-1.2zM85.8 353.1h1.2v1.8h-1.2zM101.6 353.1h1.2v1.8h-1.2zM117.5 353.1h1.2v1.8h-1.2zM133.3 353.1h1.2v1.8h-1.2zM149.1 353.1h1.2v1.8h-1.2zM164.9 353.1h1.2v1.8h-1.2zM180.8 353.1h1.2v1.8h-1.2zM196.6 353.1h1.2v1.8h-1.2zM212.4 353.1h1.2v1.8h-1.2zM228.3 353.1h1.2v1.8h-1.2zM244.1 353.1h1.2v1.8h-1.2zM259.9 353.1h1.2v1.8h-1.2zM275.8 353.1h1.2v1.8h-1.2zM291.6 353.1h1.2v1.8h-1.2zM307.4 353.1h1.2v1.8h-1.2zM323.2 353.1h1.2v1.8h-1.2zM339.1 353.1h1.2v1.8h-1.2zM354.9 353.1h1.2v1.8h-1.2zM370.7 353.1h1.2v1.8h-1.2zM386.6 353.1h1.2v1.8h-1.2zM402.4 353.1h1.2v1.8h-1.2zM418.2 353.1h1.2v1.8h-1.2zM434.1 353.1h1.2v1.8h-1.2zM449.9 353.1h1.2v1.8h-1.2zM465.7 353.1h1.2v1.8h-1.2zM481.5 353.1h1.2v1.8h-1.2zM497.4 353.1h1.2v1.8h-1.2zM513.2 353.1h1.2v1.8h-1.2zM529.0 353.1h1.2v1.8h-1.2zM544.9 353.1h1.2v1.8h-1.2zM560.7 353.1h1.2v1.8h-1.2zM576.5 353.1h1.2v1.8h-1.2zM592.4 353.1h1.2v1.8h-1.2zM608.2 353.1h1.2v1.8h-1.2zM624.0 353.1h1.2v1.8h-1.2zM639.8 353.1h1.2v1.8h-1.2zM655.7 353.1h1.2v1.8h-1.2zM671.5 353.1h1.2v1.8h-1.2zM687.3 353.1h1.2v1.8h-1.2zM703.2 353.1h1.2v1.8h-1.2zM719.0 353.1h1.2v1.8h-1.2zM734.8 353.1h1.2v1.8h-1.2zM750.7 353.1h1.2v1.8h-1.2zM766.5 353.1h1.2v1.8h-1.2zM782.3 353.1h1.2v1.8h-1.2zM798.1 353.1h1.2v1.8h-1.2zM23.07 353.1h6v1.9h-6z" fill="#d8a8d8"/><rect x="23.07" y="400.35" width="792.2299999999999" height="1.5" fill="#3ca83c"/><path d="M38.3 400.2h1.2v1.8h-1.2zM54.1 400.2h1.2v1.8h-1.2zM70.0 400.2h1.2v1.8h-1.2zM85.8 400.2h1.2v1.8h-1.2zM101.6 400.2h1.2v1.8h-1.2zM117.5 400.2h1.2v1.8h-1.2zM133.3 400.2h1.2v1.8h-1.2zM149.1 400.2h1.2v1.8h-1.2zM164.9 400.2h1.2v1.8h-1.2zM180.8 400.2h1.2v1.8h-1.2zM196.6 400.2h1.2v1.8h-1.2zM212.4 400.2h1.2v1.8h-1.2zM228.3 400.2h1.2v1.8h-1.2zM244.1 400.2h1.2v1.8h-1.2zM259.9 400.2h1.2v1.8h-1.2zM275.8 400.2h1.2v1.8h-1.2zM291.6 400.2h1.2v1.8h-1.2zM307.4 400.2h1.2v1.8h-1.2zM323.2 400.2h1.2v1.8h-1.2zM339.1 400.2h1.2v1.8h-1.2zM354.9 400.2h1.2v1.8h-1.2zM370.7 400.2h1.2v1.8h-1.2zM386.6 400.2h1.2v1.8h-1.2zM402.4 400.2h1.2v1.8h-1.2zM418.2 400.2h1.2v1.8h-1.2zM434.1 400.2h1.2v1.8h-1.2zM449.9 400.2h1.2v1.8h-1.2zM465.7 400.2h1.2v1.8h-1.2zM481.5 400.2h1.2v1.8h-1.2zM497.4 400.2h1.2v1.8h-1.2zM513.2 400.2h1.2v1.8h-1.2zM529.0 400.2h1.2v1.8h-1.2zM544.9 400.2h1.2v1.8h-1.2zM560.7 400.2h1.2v1.8h-1.2zM576.5 400.2h1.2v1.8h-1.2zM592.4 400.2h1.2v1.8h-1.2zM608.2 400.2h1.2v1.8h-1.2zM624.0 400.2h1.2v1.8h-1.2zM639.8 400.2h1.2v1.8h-1.2zM655.7 400.2h1.2v1.8h-1.2zM671.5 400.2h1.2v1.8h-1.2zM687.3 400.2h1.2v1.8h-1.2zM703.2 400.2h1.2v1.8h-1.2zM719.0 400.2h1.2v1.8h-1.2zM734.8 400.2h1.2v1.8h-1.2zM750.7 400.2h1.2v1.8h-1.2zM766.5 400.2h1.2v1.8h-1.2zM782.3 400.2h1.2v1.8h-1.2zM798.1 400.2h1.2v1.8h-1.2zM23.07 400.2h6v1.9h-6z" fill="#a8e0a8"/><rect x="23.07" y="117.0" width="792.2299999999999" height="378.0" fill="none" stroke="#d4d4d4" stroke-width="2"/><path d="M7 207.2H17.5L22 212.2L17.5 217.2H7Z" fill="#ffff00"/><text x="13" y="215.5" font-size="9" font-weight="bold" text-anchor="middle" fill="#000" font-family="Liberation Sans">1</text><path d="M7 253.89999999999998H17.5L22 258.9L17.5 263.9H7Z" fill="#00e4ec"/><text x="13" y="262.2" font-size="9" font-weight="bold" text-anchor="middle" fill="#000" font-family="Liberation Sans">2</text><path d="M7 348H17.5L22 353L17.5 358H7Z" fill="#ff10ff"/><text x="13" y="356.3" font-size="9" font-weight="bold" text-anchor="middle" fill="#400040" font-family="Liberation Sans">3</text><path d="M7 395.5H17.5L22 400.5L17.5 405.5H7Z" fill="#00e800"/><text x="13" y="403.8" font-size="9" font-weight="bold" text-anchor="middle" fill="#003000" font-family="Liberation Sans">4</text><path d="M831.6 206.8H822L817 211.9L822 217H831.6Z" fill="#ffff00"/><text x="826.8" y="215.2" font-size="9" font-weight="bold" text-anchor="middle" fill="#202000" font-family="Liberation Sans">T</text><path d="M143 96H150.6V83.4H157V96H167.5" fill="none" stroke="#7ac87a" stroke-width="1.3"/></svg>
<div class="a" style="left:23px;top:498.5px;width:77px;height:15.5px;background:#000"></div>
<div class="a" style="left:24px;top:499.7px;width:23px;height:12.8px;background:#ffff00"></div>
<div class="t" style="left:25px;top:501.62px;font-size:10.5px;color:#000;">CH1</div>
<div class="t" style="left:48px;top:501.62px;font-size:10.5px;color:#e8e820;">∿</div>
<div class="t" style="left:61px;top:501.62px;font-size:10.5px;color:#e8e820;">200mV</div>
<div class="a" style="left:115px;top:498.5px;width:77px;height:15.5px;background:#000"></div>
<div class="t" style="left:117px;top:501.62px;font-size:10.5px;color:#20c8c8;">CH2</div>
<div class="t" style="left:140px;top:501.62px;font-size:10.5px;color:#20c8c8;">∿</div>
<div class="t" style="left:153px;top:501.62px;font-size:10.5px;color:#20c8c8;">200mV</div>
<div class="a" style="left:207px;top:498.5px;width:77px;height:15.5px;background:#000"></div>
<div class="t" style="left:209px;top:501.62px;font-size:10.5px;color:#c020c0;">CH3</div>
<div class="t" style="left:232px;top:501.62px;font-size:10.5px;color:#c020c0;">∿</div>
<div class="t" style="left:245px;top:501.62px;font-size:10.5px;color:#c020c0;">200mV</div>
<div class="a" style="left:299px;top:498.5px;width:77px;height:15.5px;background:#000"></div>
<div class="t" style="left:301px;top:501.62px;font-size:10.5px;color:#20c020;">CH4</div>
<div class="t" style="left:324px;top:501.62px;font-size:10.5px;color:#20c020;">∿</div>
<div class="t" style="left:337px;top:501.62px;font-size:10.5px;color:#20c020;">200mV</div>
<div class="a" style="left:739px;top:498px;width:75.5px;height:15.5px;background:#000"></div>
<div class="t" style="left:741px;top:501.79px;font-size:10.3px;color:#e07a18;">Time: 20.00us</div>
<div class="a" style="left:217px;top:28px;width:52px;height:14.6px;border:1px solid #6c7480;border-radius:2px;background:linear-gradient(180deg,#e8ebf0,#dde2ea);box-shadow:inset 0 0 0 1px rgba(255,255,255,0.6)"></div>
<div class="t" style="left:221.2px;top:28.99px;font-size:11px;color:#1e1e1e;">Measure</div>
<div class="a" style="left:216px;top:42.5px;width:145.5px;height:96px;background:#f0f0f0;border:1px solid #979797;box-shadow:1px 1px 1px rgba(0,0,0,0.25)"></div>
<div class="a" style="left:240.5px;top:43.5px;width:1px;height:94px;background:#e2e3e3;border-right:1px solid #fff"></div>
<div class="a" style="left:218.3px;top:62.8px;width:141.5px;height:18.4px;border:1px solid #c4daf2;border-radius:2px;background:linear-gradient(180deg,#f0f5fb,#e4edf8)"></div>
<div class="t" style="left:245px;top:48.89px;font-size:11px;color:#1e1e28;">Source</div>
<div class="a" style="left:348px;top:51.4px;width:0;height:0;border-top:3.5px solid transparent;border-bottom:3.5px solid transparent;border-left:4px solid #000"></div>
<div class="t" style="left:245px;top:67.31px;font-size:11px;color:#1e1e28;">Vertical</div>
<div class="a" style="left:348px;top:69.8px;width:0;height:0;border-top:3.5px solid transparent;border-bottom:3.5px solid transparent;border-left:4px solid #000"></div>
<div class="t" style="left:245px;top:85.73px;font-size:11px;color:#1e1e28;">Horizontal</div>
<div class="a" style="left:348px;top:88.2px;width:0;height:0;border-top:3.5px solid transparent;border-bottom:3.5px solid transparent;border-left:4px solid #000"></div>
<div class="t" style="left:245px;top:104.15px;font-size:11px;color:#1e1e28;">Clear Measure</div>
<div class="t" style="left:245px;top:122.57px;font-size:11px;color:#1e1e28;">Edit Options</div>
<div class="a" style="left:357.5px;top:61.3px;width:172px;height:251.6px;background:#f0f0f0;border:1px solid #979797;box-shadow:1px 1px 1px rgba(0,0,0,0.25)"></div>
<div class="a" style="left:382px;top:62.3px;width:1px;height:249px;background:#e2e3e3;border-right:1px solid #fff"></div>
<div class="t" style="left:386.5px;top:67.09px;font-size:11px;color:#1e1e28;">Maximum</div>
<div class="t" style="left:386.5px;top:85.49px;font-size:11px;color:#1e1e28;">Minimum</div>
<div class="t" style="left:386.5px;top:103.89px;font-size:11px;color:#1e1e28;">Peak to Peak</div>
<div class="a" style="left:384px;top:122.6px;width:143px;height:1px;background:#e0e0e0;border-bottom:1px solid #fff;height:2px"></div>
<div class="t" style="left:386.5px;top:128.94px;font-size:11px;color:#1e1e28;">Top</div>
<div class="t" style="left:386.5px;top:147.34px;font-size:11px;color:#1e1e28;">Base</div>
<div class="t" style="left:386.5px;top:165.74px;font-size:11px;color:#1e1e28;">Middle</div>
<div class="a" style="left:384px;top:184.6px;width:143px;height:1px;background:#e0e0e0;border-bottom:1px solid #fff;height:2px"></div>
<div class="t" style="left:386.5px;top:190.79px;font-size:11px;color:#1e1e28;">RMS</div>
<div class="t" style="left:386.5px;top:209.19px;font-size:11px;color:#1e1e28;">Amplitude</div>
<div class="a" style="left:384px;top:227.2px;width:143px;height:1px;background:#e0e0e0;border-bottom:1px solid #fff;height:2px"></div>
<div class="t" style="left:386.5px;top:234.24px;font-size:11px;color:#1e1e28;">Mean</div>
<div class="t" style="left:386.5px;top:252.64px;font-size:11px;color:#1e1e28;">Cycle Mean</div>
<div class="a" style="left:384px;top:271.6px;width:143px;height:1px;background:#e0e0e0;border-bottom:1px solid #fff;height:2px"></div>
<div class="t" style="left:386.5px;top:277.69px;font-size:11px;color:#1e1e28;">Positive Overshoot</div>
<div class="t" style="left:386.5px;top:296.09px;font-size:11px;color:#1e1e28;">Negative Overshoot</div>
<div class="a" style="left:832px;top:78px;width:162px;height:440px;background:#f0f0f0"></div>
<div class="a" style="left:832px;top:78px;width:2.3px;height:439px;background:#fafafa"></div>
<div class="a" style="left:834px;top:78px;width:160px;height:1px;background:#b4b4b4"></div>
<div class="a" style="left:834px;top:79px;width:160px;height:1px;background:#fff"></div>
<div class="t" style="left:843px;top:87.12px;font-size:9.2px;color:#222;-webkit-text-stroke:0.08px currentColor;letter-spacing:0px">Connect:</div>
<div class="a" style="left:834px;top:103px;width:160px;height:1.2px;background:#a4a4a4"></div>
<div class="a" style="left:834px;top:103px;width:1.2px;height:414px;background:#a4a4a4"></div>
<div class="a" style="left:835.2px;top:104.2px;width:158px;height:1px;background:#fff"></div>
<div class="a" style="left:835.2px;top:104.2px;width:1px;height:412px;background:#fff"></div>
<div class="a" style="left:983.5px;top:104.5px;width:10.5px;height:412px;background:linear-gradient(90deg,#e4e4e4,#f6f6f6 40%,#f0f0f0)"></div>
<div class="a" style="left:987px;top:108.5px;width:0;height:0;border-left:3px solid transparent;border-right:3px solid transparent;border-bottom:4px solid #222"></div>
<div class="a" style="left:983.5px;top:118.6px;width:10.5px;height:225.7px;border:1px solid #9c9c9c;border-radius:1.5px;background:linear-gradient(90deg,#f4f4f4,#e6e6e6 60%,#d8d8d8)"></div>
<div class="a" style="left:986.5px;top:228.6px;width:5.5px;height:1.2px;background:#555"></div>
<div class="a" style="left:986.5px;top:231.2px;width:5.5px;height:1.2px;background:#555"></div>
<div class="a" style="left:986.5px;top:233.8px;width:5.5px;height:1.2px;background:#555"></div>
<div class="a" style="left:840.6px;top:114px;width:137.39999999999998px;height:91.5px;border:1px solid #d5dfe5;border-radius:2px;box-shadow:1px 1px 0 #fff inset, 1px 1px 0 #fff"></div>
<div class="a" style="left:844px;top:111px;width:46px;height:6px;background:#f0f0f0"></div>
<div class="t" style="left:847px;top:109.22px;font-size:9.2px;color:#1a1a1a;-webkit-text-stroke:0.08px currentColor;letter-spacing:0px">Horizontal</div>
<div class="a" style="left:840.6px;top:216.3px;width:137.39999999999998px;height:126.19999999999999px;border:1px solid #d5dfe5;border-radius:2px;box-shadow:1px 1px 0 #fff inset, 1px 1px 0 #fff"></div>
<div class="a" style="left:843px;top:213.3px;width:36px;height:6px;background:#f0f0f0"></div>
<div class="t" style="left:846px;top:213.22px;font-size:9.2px;color:#1a1a1a;-webkit-text-stroke:0.08px currentColor;letter-spacing:0px">Vertical</div>
<div class="a" style="left:840.6px;top:354.2px;width:137.39999999999998px;height:175.8px;border:1px solid #d5dfe5;border-radius:2px;box-shadow:1px 1px 0 #fff inset, 1px 1px 0 #fff"></div>
<div class="a" style="left:843px;top:351.2px;width:35px;height:6px;background:#f0f0f0"></div>
<div class="t" style="left:846px;top:348.82px;font-size:9.2px;color:#1a1a1a;-webkit-text-stroke:0.08px currentColor;letter-spacing:0px">Trigger</div>
<div class="t" style="left:842px;top:127.02px;font-size:9.2px;color:#1a1a1a;-webkit-text-stroke:0.08px currentColor;letter-spacing:-0.35px">Time / DIV</div>
<div class="a" style="left:841px;top:140.5px;width:57px;height:18.19999999999999px;border:1px solid #8c8c8c;border-radius:2.5px;background:linear-gradient(180deg,#f4f4f4,#ececec 45%,#dcdcdc 50%,#cfcfcf)"></div>
<div class="t" style="left:845px;top:145.16px;font-size:9.5px;color:#111;-webkit-text-stroke:0.08px currentColor;letter-spacing:0px">20.00us</div>
<div class="a" style="left:887.5px;top:148.3px;width:0;height:0;border-left:3.5px solid transparent;border-right:3.5px solid transparent;border-top:3.8px solid #000"></div>
<div class="t" style="left:842px;top:166.22px;font-size:9.2px;color:#1a1a1a;-webkit-text-stroke:0.08px currentColor;letter-spacing:0px">Format</div>
<div class="a" style="left:841px;top:181.7px;width:57px;height:17.80000000000001px;border:1px solid #8c8c8c;border-radius:2.5px;background:linear-gradient(180deg,#f4f4f4,#ececec 45%,#dcdcdc 50%,#cfcfcf)"></div>
<div class="t" style="left:845px;top:186.16px;font-size:9.5px;color:#111;-webkit-text-stroke:0.08px currentColor;letter-spacing:0px">Y - T</div>
<div class="a" style="left:887.5px;top:189.3px;width:0;height:0;border-left:3.5px solid transparent;border-right:3.5px solid transparent;border-top:3.8px solid #000"></div>
<div class="a" style="left:843.6px;top:224.5px;width:56.39999999999998px;height:17.5px;border:1px solid #8c8c8c;border-radius:2.5px;background:linear-gradient(180deg,#f4f4f4,#ececec 45%,#dcdcdc 50%,#cfcfcf)"></div>
<div class="t" style="left:847.6px;top:228.81px;font-size:9.5px;color:#111;-webkit-text-stroke:0.08px currentColor;letter-spacing:0px">CH1</div>
<div class="a" style="left:889.5px;top:231.9px;width:0;height:0;border-left:3.5px solid transparent;border-right:3.5px solid transparent;border-top:3.8px solid #000"></div>
<div class="a" style="left:902px;top:232.4px;width:10.8px;height:10.6px;border:1px solid #8f8f8f;background:linear-gradient(135deg,#dcdcdc,#fafafa)"></div>
<svg class="a" style="left:902px;top:232px" width="12" height="12" viewBox="0 0 12 12"><path d="M2.5 6L5 9L9.5 2.5" fill="none" stroke="#3a54a8" stroke-width="1.4"/></svg>
<div class="t" style="left:916px;top:234.72px;font-size:9.2px;color:#1a1a1a;-webkit-text-stroke:0.08px currentColor;letter-spacing:-0.45px">ON/OFF</div>
<div class="a" style="left:843.6px;top:247px;width:57px;height:17px;border:1px solid #c8ccd2;background:#fafafa"></div>
<div class="t" style="left:847px;top:250.96px;font-size:9.5px;color:#111;-webkit-text-stroke:0.08px currentColor;letter-spacing:0px">200mV</div>
<div class="a" style="left:886px;top:248px;width:14px;height:7.5px;border:1px solid #b8c0c8;background:linear-gradient(180deg,#f8f8f8,#e4e8ec)"></div>
<div class="a" style="left:886px;top:255.5px;width:14px;height:7.5px;border:1px solid #b8c0c8;background:linear-gradient(180deg,#f8f8f8,#e4e8ec)"></div>
<div class="a" style="left:890.5px;top:250px;width:0;height:0;border-left:2.5px solid transparent;border-right:2.5px solid transparent;border-bottom:2.5px solid #4a5a9a"></div>
<div class="a" style="left:890.5px;top:258.5px;width:0;height:0;border-left:2.5px solid transparent;border-right:2.5px solid transparent;border-top:2.5px solid #4a5a9a"></div>
<div class="a" style="left:843.6px;top:271.8px;width:57.0px;height:18.19999999999999px;border:1px solid #8c8c8c;border-radius:2.5px;background:linear-gradient(180deg,#f4f4f4,#ececec 45%,#dcdcdc 50%,#cfcfcf)"></div>
<div class="t" style="left:847.6px;top:276.46px;font-size:9.5px;color:#111;-webkit-text-stroke:0.08px currentColor;letter-spacing:0px">AC</div>
<div class="a" style="left:890.1px;top:279.6px;width:0;height:0;border-left:3.5px solid transparent;border-right:3.5px solid transparent;border-top:3.8px solid #000"></div>
<div class="a" style="left:843.6px;top:294.5px;width:57.0px;height:18.100000000000023px;border:1px solid #8c8c8c;border-radius:2.5px;background:linear-gradient(180deg,#f4f4f4,#ececec 45%,#dcdcdc 50%,#cfcfcf)"></div>
<div class="t" style="left:847.6px;top:299.11px;font-size:9.5px;color:#111;-webkit-text-stroke:0.08px currentColor;letter-spacing:0px">x1</div>
<div class="a" style="left:890.1px;top:302.2px;width:0;height:0;border-left:3.5px solid transparent;border-right:3.5px solid transparent;border-top:3.8px solid #000"></div>
<div class="t" style="left:849px;top:369.12px;font-size:9.2px;color:#1a1a1a;-webkit-text-stroke:0.08px currentColor;letter-spacing:0px">Trigger Mode</div>
<div class="a" style="left:916.4px;top:363.4px;width:56.5px;height:17.5px;border:1px solid #8c8c8c;border-radius:2.5px;background:linear-gradient(180deg,#f4f4f4,#ececec 45%,#dcdcdc 50%,#cfcfcf)"></div>
<div class="t" style="left:920.4px;top:367.71px;font-size:9.5px;color:#111;-webkit-text-stroke:0.08px currentColor;letter-spacing:0px">Edge</div>
<div class="a" style="left:962.4px;top:370.8px;width:0;height:0;border-left:3.5px solid transparent;border-right:3.5px solid transparent;border-top:3.8px solid #000"></div>
<div class="t" style="left:849px;top:392.42px;font-size:9.2px;color:#1a1a1a;-webkit-text-stroke:0.08px currentColor;letter-spacing:0px">Trigger Sweep</div>
<div class="a" style="left:916.4px;top:386.7px;width:56.5px;height:17.5px;border:1px solid #8c8c8c;border-radius:2.5px;background:linear-gradient(180deg,#f4f4f4,#ececec 45%,#dcdcdc 50%,#cfcfcf)"></div>
<div class="t" style="left:920.4px;top:391.01px;font-size:9.5px;color:#111;-webkit-text-stroke:0.08px currentColor;letter-spacing:0px">AUTO</div>
<div class="a" style="left:962.4px;top:394.1px;width:0;height:0;border-left:3.5px solid transparent;border-right:3.5px solid transparent;border-top:3.8px solid #000"></div>
<div class="t" style="left:849px;top:415.92px;font-size:9.2px;color:#1a1a1a;-webkit-text-stroke:0.08px currentColor;letter-spacing:0px">Trigger Source</div>
<div class="a" style="left:916.4px;top:410.2px;width:56.5px;height:17.5px;border:1px solid #8c8c8c;border-radius:2.5px;background:linear-gradient(180deg,#f4f4f4,#ececec 45%,#dcdcdc 50%,#cfcfcf)"></div>
<div class="t" style="left:920.4px;top:414.51px;font-size:9.5px;color:#111;-webkit-text-stroke:0.08px currentColor;letter-spacing:0px">CH1</div>
<div class="a" style="left:962.4px;top:417.6px;width:0;height:0;border-left:3.5px solid transparent;border-right:3.5px solid transparent;border-top:3.8px solid #000"></div>
<div class="t" style="left:849px;top:439.22px;font-size:9.2px;color:#1a1a1a;-webkit-text-stroke:0.08px currentColor;letter-spacing:0px">Trigger Slope</div>
<div class="a" style="left:916.4px;top:433.5px;width:56.5px;height:17.5px;border:1px solid #8c8c8c;border-radius:2.5px;background:linear-gradient(180deg,#f4f4f4,#ececec 45%,#dcdcdc 50%,#cfcfcf)"></div>
<div class="t" style="left:920.4px;top:437.81px;font-size:9.5px;color:#111;-webkit-text-stroke:0.08px currentColor;letter-spacing:0px">+</div>
<div class="a" style="left:962.4px;top:440.9px;width:0;height:0;border-left:3.5px solid transparent;border-right:3.5px solid transparent;border-top:3.8px solid #000"></div>
<svg class="a" style="left:0;top:0" width="1000" height="544" viewBox="0 0 1000 544"><defs><radialGradient id="ring" cx="0.5" cy="0.5" r="0.5"><stop offset="0.82" stop-color="#c4c4c4"/><stop offset="0.88" stop-color="#9a9a9a"/><stop offset="1" stop-color="#8a8a8a"/></radialGradient></defs><path d="M916.5 181.8A31.5 31.5 0 1 1 961.1 181.8" fill="none" stroke="#333" stroke-width="0.9"/><path d="M918.6 179.7L914.1 184.2" stroke="#111" stroke-width="1.2"/><path d="M959.0 179.7L963.5 184.2" stroke="#111" stroke-width="1.2"/><circle cx="938.8" cy="159.5" r="29" fill="#f4f4f4"/><circle cx="938.8" cy="159.5" r="28.3" fill="url(#ring)" stroke="#7a7a7a" stroke-width="0.8"/><circle cx="938.8" cy="159.5" r="23.6" fill="#0000d0" stroke="#000080" stroke-width="1.5"/><path d="M943 155L952.4 145" stroke="#c8c8c8" stroke-width="1.8"/><path d="M916.5 307.1A31.5 31.5 0 1 1 961.1 307.1" fill="none" stroke="#333" stroke-width="0.9"/><path d="M918.6 305.0L914.1 309.5" stroke="#111" stroke-width="1.2"/><path d="M959.0 305.0L963.5 309.5" stroke="#111" stroke-width="1.2"/><circle cx="938.8" cy="284.8" r="29" fill="#f4f4f4"/><circle cx="938.8" cy="284.8" r="28.3" fill="url(#ring)" stroke="#7a7a7a" stroke-width="0.8"/><circle cx="938.8" cy="284.8" r="23.6" fill="#ffff00" stroke="#a0a000" stroke-width="1.5"/><path d="M937.5 279.4L935 266.8" stroke="#222" stroke-width="1.8"/><circle cx="891" cy="91.3" r="8.8" fill="#a4a4a4" stroke="#555" stroke-width="1"/></svg>
<div class="a" style="left:4px;top:516.2px;width:990px;height:17.5px;background:linear-gradient(180deg,#f8f8f8 0,#f8f8f8 1.6px,#c4c4c4 1.8px,#c8c8c8 2.4px,#fafafa 2.6px,#eeeeee 3.6px,#ededed 100%)"></div>
<div class="t" style="left:6px;top:521.72px;font-size:10.5px;color:#222;">Searching Device...</div>
<div class="a" style="left:793.5px;top:519px;width:200.5px;height:14.7px;background:#f2f2f2;border-left:1px solid #dadada"></div>
<svg class="a" style="left:986px;top:522px" width="8" height="11" viewBox="0 0 8 11"><path d="M5.5 2h1v1h-1zM5.5 5h1v1h-1zM2.5 5h1v1h-1zM5.5 8h1v1h-1zM2.5 8h1v1h-1zM-0.5 8h1v1h-1z" fill="#b8b8b8"/></svg>
<div class="t" style="left:797px;top:521.72px;font-size:10.5px;color:#222;">0.00 mSa</div>
<div class="t" style="left:888px;top:521.72px;font-size:10.5px;color:#222;">31-12-2012</div>
<div class="t" style="left:949px;top:521.72px;font-size:10.5px;color:#222;">14:13</div>
</body></html>
